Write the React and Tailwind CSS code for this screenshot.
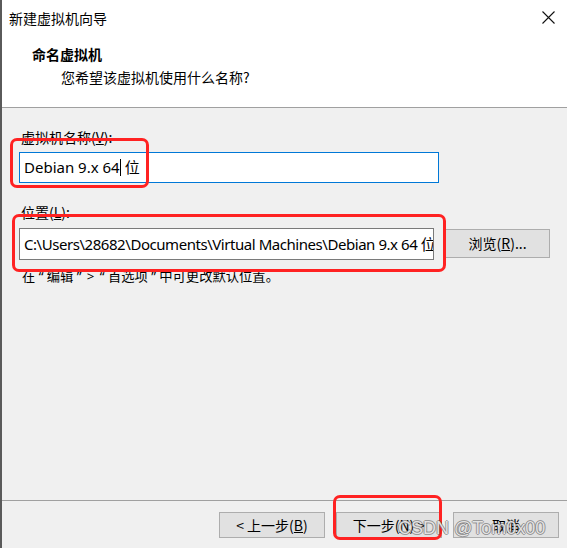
import React from "react";

const cjk = { fontFamily: '"Noto Sans CJK SC", "Noto Sans", sans-serif' };
const latin = { fontFamily: '"Noto Sans", "Noto Sans CJK SC", sans-serif' };

function Btn({ children, className = "" }) {
  return (
    <div
      className={
        "w-[106px] h-[26px] flex items-center justify-center bg-[#e1e1e1] border border-[#adadad] text-[14px] text-black " +
        className
      }
    >
      {children}
    </div>
  );
}

function Q({ children }) {
  return (
    <span className="inline-block w-[11.5px] text-center" style={latin}>
      {children}
    </span>
  );
}

export default function App() {
  return (
    <div
      className="relative w-[567px] h-[548px] bg-[#f0f0f0] flex flex-col overflow-hidden border-l-2 border-[#5a5a5a] text-black"
      style={cjk}
    >
      {/* title bar */}
      <div className="h-[36px] bg-white flex items-center justify-between pl-[7px] pr-[12px]">
        <span className="text-[14px] leading-[20px]">新建虚拟机向导</span>
        <svg width="13" height="13" viewBox="0 0 13 13" className="mt-[-1px]">
          <path d="M0.5 0.5 L12.5 12.5 M12.5 0.5 L0.5 12.5" stroke="#111" strokeWidth="1.1" />
        </svg>
      </div>
      {/* header */}
      <div className="h-[72px] bg-white border-b border-[#a0a0a0] flex flex-col pl-[30px] pt-[8px]">
        <div className="text-[14px] leading-[20px] font-bold">命名虚拟机</div>
        <div className="text-[14px] leading-[20px] pl-[29px] mt-[3px]">您希望该虚拟机使用什么名称?</div>
      </div>
      {/* content */}
      <div className="flex flex-col px-[17px] pt-[19px]">
        <div className="text-[14px] leading-[20px] pl-[2px]">
          虚拟机名称(<u>V</u>):
        </div>
        <div className="mt-[5px] w-[420px] h-[31px] bg-white border border-[#0078d7] flex items-center pl-[4px] text-[15px]" style={latin}>
          <span>Debian 9.x 64</span>
          <span className="inline-block w-[1px] h-[17px] bg-black"></span>
          <span className="ml-[4px]">位</span>
        </div>
        <div className="mt-[19px] text-[14px] leading-[20px] pl-[2px]">
          位置(<u>L</u>):
        </div>
        <div className="mt-[6px] flex items-start gap-[11px]">
          <div className="w-[420px] h-[32px] bg-white border border-[#7a7a7a] flex items-center pl-[4px] text-[15px] tracking-[-0.45px] whitespace-nowrap overflow-hidden" style={latin}>
            C:\Users\28682\Documents\Virtual Machines\Debian 9.x 64 位
          </div>
          <Btn className="w-[98px] h-[29px] mt-[1px]">
            浏览(<u>R</u>)...
          </Btn>
        </div>
        <div className="mt-[6px] text-[13.3px] leading-[20px] pl-[3px] whitespace-nowrap">
          在<Q>“</Q>编辑<Q>”</Q><Q>&gt;</Q><Q>“</Q>首选项<Q>”</Q>中可更改默认位置。
        </div>
      </div>
      <div className="flex-1" />
      {/* footer */}
      <div className="h-[48px] border-t border-[#a0a0a0] flex items-start justify-end gap-[11px] pt-[11px] pr-[8px]">
        <Btn>
          &lt; 上一步(<u>B</u>)
        </Btn>
        <Btn className="w-[104px] border-[#0078d7]">
          下一步(<u>N</u>) &gt;
        </Btn>
        <Btn>取消</Btn>
      </div>

      {/* red annotation boxes */}
      <div className="absolute left-[8px] top-[138px] w-[139px] h-[50px] border-[3px] border-[#ff2222] rounded-[7px]" />
      <div className="absolute left-[10px] top-[214px] w-[434px] h-[58px] border-[3px] border-[#ff2222] rounded-[7px]" />
      <div className="absolute left-[331px] top-[495px] w-[109px] h-[45px] border-[3px] border-[#ff2222] rounded-[7px]" />

      {/* watermark */}
      <div
        className="absolute left-[396px] top-[516px] text-[18px] leading-[24px] text-white/80 [text-shadow:1px_0_0_rgba(90,90,90,0.55),-1px_0_0_rgba(90,90,90,0.55),0_1px_0_rgba(90,90,90,0.55),0_-1px_0_rgba(90,90,90,0.55)]"
        style={{ fontFamily: '"Liberation Sans", Arial, sans-serif' }}
      >
        CSDN @Tom0x00
      </div>
    </div>
  );
}
